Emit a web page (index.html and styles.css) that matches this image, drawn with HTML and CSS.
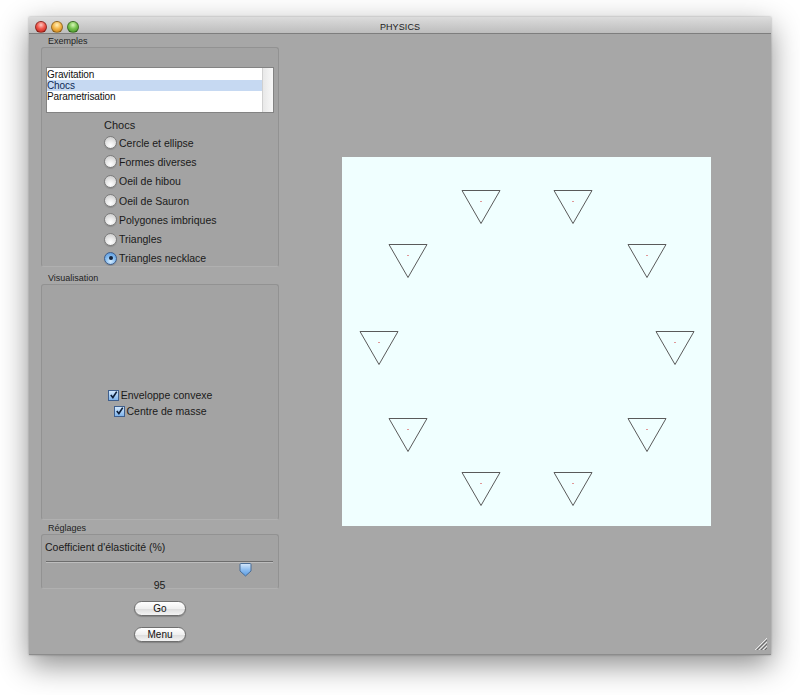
FILE: index.html
```html
<!DOCTYPE html>
<html>
<head>
<meta charset="utf-8">
<link rel="stylesheet" href="styles.css">
</head>
<body>
<div class="window">
  <div class="titlebar">
    <div class="lights">
      <span class="light red"></span>
      <span class="light yellow"></span>
      <span class="light green"></span>
    </div>
    <div class="title">PHYSICS</div>
  </div>
  <div class="content">
    <div class="sidebar">
      <div class="glabel gl1">Exemples</div>
      <div class="gbox gbox-ex">
        <div class="list">
          <div class="rows">
            <div class="row">Gravitation</div>
            <div class="row selected">Chocs</div>
            <div class="row">Parametrisation</div>
          </div>
          <div class="scroll"></div>
        </div>
        <div class="radios">
          <div class="rlabel">Chocs</div>
          <div class="radio"><span class="rb"></span>Cercle et ellipse</div>
          <div class="radio"><span class="rb"></span>Formes diverses</div>
          <div class="radio"><span class="rb"></span>Oeil de hibou</div>
          <div class="radio"><span class="rb"></span>Oeil de Sauron</div>
          <div class="radio"><span class="rb"></span>Polygones imbriques</div>
          <div class="radio"><span class="rb"></span>Triangles</div>
          <div class="radio"><span class="rb on"></span>Triangles necklace</div>
        </div>
      </div>
      <div class="glabel gl2">Visualisation</div>
      <div class="gbox gbox-vis">
        <div class="check"><span class="cb"><svg viewBox="0 0 10 10" width="10" height="10"><path d="M2 5 L4.3 7.8 L8.6 1.2" fill="none" stroke="#0d1f3a" stroke-width="1.8"/></svg></span>Enveloppe convexe</div>
        <div class="check"><span class="cb"><svg viewBox="0 0 10 10" width="10" height="10"><path d="M2 5 L4.3 7.8 L8.6 1.2" fill="none" stroke="#0d1f3a" stroke-width="1.8"/></svg></span>Centre de masse</div>
      </div>
      <div class="glabel gl3">Réglages</div>
      <div class="gbox gbox-reg">
        <div class="slabel">Coefficient d'élasticité (%)</div>
        <div class="slider">
          <div class="track"></div>
          <svg class="thumb" viewBox="0 0 13 14" width="13" height="14"><defs><linearGradient id="tg" x1="0" y1="0" x2="0" y2="1"><stop offset="0" stop-color="#d6e8fb"/><stop offset="0.5" stop-color="#8dbdf0"/><stop offset="1" stop-color="#5b9be0"/></linearGradient></defs><path d="M1 1.5 Q1 0.5 2 0.5 L11 0.5 Q12 0.5 12 1.5 L12 8 L6.5 13 L1 8 Z" fill="url(#tg)" stroke="#4a6d96" stroke-width="1"/></svg>
        </div>
        <div class="sval">95</div>
      </div>
      <div class="buttons">
        <div class="btn">Go</div>
        <div class="btn">Menu</div>
      </div>
    </div>
    <div class="stage">
      <svg class="canvas" width="369" height="369" viewBox="0 0 369 369">
        <g fill="none" stroke="#5a5a5a" stroke-width="1">
          <path d="M120 33.5 H158 L139 66.5 Z"/>
          <path d="M212 33.5 H250 L231 66.5 Z"/>
          <path d="M47 87.5 H85 L66 120.5 Z"/>
          <path d="M286 87.5 H324 L305 120.5 Z"/>
          <path d="M18 174.5 H56 L37 207.5 Z"/>
          <path d="M314 174.5 H352 L333 207.5 Z"/>
          <path d="M47 261.5 H85 L66 294.5 Z"/>
          <path d="M286 261.5 H324 L305 294.5 Z"/>
          <path d="M120 315.5 H158 L139 348.5 Z"/>
          <path d="M212 315.5 H250 L231 348.5 Z"/>
        </g>
        <g fill="#d03030">
          <rect x="138.5" y="44" width="1" height="1"/>
          <rect x="230.5" y="44" width="1" height="1"/>
          <rect x="65.5" y="98" width="1" height="1"/>
          <rect x="304.5" y="98" width="1" height="1"/>
          <rect x="36.5" y="185" width="1" height="1"/>
          <rect x="332.5" y="185" width="1" height="1"/>
          <rect x="65.5" y="272" width="1" height="1"/>
          <rect x="304.5" y="272" width="1" height="1"/>
          <rect x="138.5" y="326" width="1" height="1"/>
          <rect x="230.5" y="326" width="1" height="1"/>
        </g>
      </svg>
    </div>
  </div>
  <svg class="grip" width="12" height="12" viewBox="0 0 12 12">
    <g stroke="#e8e8e8" stroke-width="1">
      <path d="M12 0 L0 12"/><path d="M12 4 L4 12"/><path d="M12 8 L8 12"/>
    </g>
    <g stroke="#6a6a6a" stroke-width="1">
      <path d="M12 2 L2 12"/><path d="M12 6 L6 12"/><path d="M12 10 L10 12"/>
    </g>
  </svg>
</div>
</body>
</html>
```

FILE: styles.css
```css
* { box-sizing: border-box; }
html, body { margin: 0; padding: 0; background: #ffffff; }
body {
  width: 800px;
  height: 695px;
  overflow: hidden;
  padding-top: 17px;
  padding-left: 29px;
  font-family: "Liberation Sans", "DejaVu Sans", sans-serif;
  color: #1a1a1a;
}
.window {
  position: relative;
  width: 742px;
  height: 638px;
  background: #a7a7a7;
  border-bottom: 1px solid #8c8c8c;
  box-shadow: 0 10px 28px rgba(0,0,0,0.45), 0 0 2px rgba(0,0,0,0.3);
}
.titlebar {
  position: relative;
  height: 17px;
  background: linear-gradient(#dcdcdc, #bdbdbd);
  border-bottom: 1px solid #7e7e7e;
  display: flex;
  align-items: center;
  justify-content: center;
}
.lights {
  position: absolute;
  left: 6px;
  top: 4px;
  display: flex;
  gap: 4px;
}
.light {
  width: 12px;
  height: 12px;
  border-radius: 50%;
  border: 1px solid rgba(0,0,0,0.35);
}
.red { background: radial-gradient(circle at 50% 30%, #ffc6c0 0, #f0584c 45%, #b8170e 100%); }
.yellow { background: radial-gradient(circle at 50% 30%, #fff0b8 0, #f5b64a 45%, #c27a0f 100%); }
.green { background: radial-gradient(circle at 50% 30%, #d8f7b8 0, #78c450 45%, #3a8a1e 100%); }
.title {
  font-size: 9px;
  color: #1c1c1c;
  padding-top: 3px;
  letter-spacing: 0.1px;
}
.content {
  display: flex;
  height: 620px;
}
.sidebar {
  flex: none;
  width: 238px;
  margin-left: 12px;
  display: flex;
  flex-direction: column;
}
.sidebar > * { flex: none; }
.glabel {
  display: flex;
  align-items: flex-end;
  font-size: 9px;
  line-height: 11px;
  padding-left: 7px;
  color: #1e1e1e;
}
.gl1 { height: 13px; }
.gl2 { height: 17px; }
.gl3 { height: 14px; }
.gbox {
  border: 1px solid #929292;
  border-bottom-color: #b0b0b0;
  border-radius: 3px;
  background: #a3a3a3;
}
.gbox-ex { height: 220px; padding: 19px 4px 0 4px; overflow: hidden; }
.list {
  height: 46px;
  background: #fff;
  border: 1px solid #838383;
  display: flex;
}
.rows { flex: 1; padding-top: 1px; }
.row {
  height: 11px;
  font-size: 10px;
  line-height: 11px;
  padding-left: 0;
  color: #111;
  letter-spacing: -0.1px;
}
.row.selected { background: #c6d9f2; color: #0f2a55; }
.scroll {
  width: 11px;
  background: linear-gradient(90deg, #e8e8e8, #f8f8f8);
  border-left: 1px solid #d0d0d0;
}
.radios {
  padding-left: 58px;
  padding-top: 5px;
}
.rlabel {
  height: 14px;
  font-size: 11px;
  line-height: 14px;
  margin-bottom: 1px;
}
.radio {
  height: 19.3px;
  display: flex;
  align-items: center;
  font-size: 10.5px;
}
.rb {
  width: 13px;
  height: 13px;
  border-radius: 50%;
  margin-right: 2px;
  border: 1px solid #7c7c7c;
  background: radial-gradient(circle at 50% 75%, #ffffff 0, #eaeaea 40%, #c4c4c4 100%);
  box-shadow: 0 1px 1px rgba(0,0,0,0.15);
  display: flex;
  align-items: center;
  justify-content: center;
}
.rb.on {
  border-color: #3d5c8a;
  background: radial-gradient(circle at 50% 75%, #d6ecff 0, #8cc0f0 45%, #4d8fd8 100%);
}
.rb.on::after {
  content: "";
  width: 4px;
  height: 4px;
  border-radius: 50%;
  background: #14233c;
}
.gbox-vis {
  height: 236px;
  display: flex;
  flex-direction: column;
  align-items: center;
  justify-content: center;
  padding-top: 2px;
}
.check {
  height: 16px;
  display: flex;
  align-items: center;
  font-size: 10.5px;
}
.cb {
  width: 11px;
  height: 11px;
  margin-right: 2px;
  border: 1px solid #3f5f8d;
  background: linear-gradient(#d4e8fc, #7fb4ec);
  display: flex;
  align-items: center;
  justify-content: center;
}
.gbox-reg {
  height: 55px;
  padding: 6px 4px 0 3px;
}
.slabel {
  font-size: 10.5px;
  line-height: 13px;
  height: 13px;
}
.slider {
  position: relative;
  height: 16px;
  margin: 0 1px 0 1px;
}
.track {
  margin-top: 7px;
  height: 2px;
  border-top: 1px solid #6d6d6d;
  border-bottom: 1px solid #bdbdbd;
}
.thumb {
  position: absolute;
  left: 193px;
  top: 2px;
}
.sval {
  text-align: center;
  font-size: 10.5px;
  line-height: 14px;
  margin-top: 1px;
}
.buttons {
  display: flex;
  flex-direction: column;
  align-items: center;
  gap: 11px;
  padding-top: 12px;
}
.btn {
  width: 52px;
  height: 15px;
  border-radius: 8px;
  border: 1px solid #6f6f6f;
  background: linear-gradient(#ffffff, #f0f0f0 50%, #dcdcdc 51%, #f4f4f4);
  box-shadow: 0 1px 1px rgba(0,0,0,0.2);
  font-size: 10px;
  line-height: 13px;
  text-align: center;
  color: #111;
}
.stage {
  flex: none;
  padding-left: 63px;
  padding-top: 123px;
}
.canvas {
  display: block;
  background: #f0ffff;
}
.grip {
  position: absolute;
  right: 4px;
  bottom: 4px;
}
```
